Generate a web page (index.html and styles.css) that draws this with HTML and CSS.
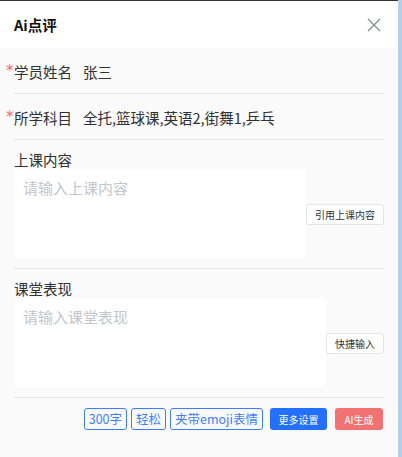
FILE: index.html
```html
<!DOCTYPE html>
<html lang="zh-CN">
  <head>
    <meta charset="UTF-8" />
    <meta name="viewport" content="width=device-width, initial-scale=1.0" />
    <title>Ai点评</title>
    <link rel="stylesheet" href="styles.css">
  </head>
  <body>
    <div class="dialog">
      <header class="dialog-header">
        <span class="dialog-title">Ai点评</span>
        <button class="close-btn" type="button" aria-label="关闭">
          <svg width="14" height="14" viewBox="0 0 14 14">
            <path d="M1 1L13 13M13 1L1 13" stroke="#8a8f99" stroke-width="1.4" fill="none" />
          </svg>
        </button>
      </header>

      <div class="dialog-body">
        <div class="info-row">
          <span class="required">*</span>
          <span class="info-label">学员姓名</span>
          <span class="info-value">张三</span>
        </div>
        <div class="info-row">
          <span class="required">*</span>
          <span class="info-label">所学科目</span>
          <span class="info-value">全托,篮球课,英语2,街舞1,乒乓</span>
        </div>

        <div class="field">
          <div class="field-label">上课内容</div>
          <div class="field-input">
            <textarea placeholder="请输入上课内容"></textarea>
            <button class="side-btn" type="button">引用上课内容</button>
          </div>
        </div>

        <div class="field">
          <div class="field-label">课堂表现</div>
          <div class="field-input">
            <textarea class="wide" placeholder="请输入课堂表现"></textarea>
            <button class="side-btn" type="button">快捷输入</button>
          </div>
        </div>

        <div class="actions">
          <span class="tag">300字</span>
          <span class="tag">轻松</span>
          <span class="tag">夹带emoji表情</span>
          <button class="btn btn-primary" type="button">更多设置</button>
          <button class="btn btn-danger" type="button">AI生成</button>
        </div>
      </div>
    </div>
    <div class="scroll-strip"></div>
  </body>
</html>
```

FILE: styles.css
```css
* {
  margin: 0;
  padding: 0;
  box-sizing: border-box;
}

body {
  display: flex;
  height: 100vh;
  font-family: "Noto Sans CJK SC", "Noto Sans", sans-serif;
  color: #303133;
  background-color: #fafafa;
  overflow: hidden;
}

.dialog {
  flex: 1;
  display: flex;
  flex-direction: column;
  border-top: 1px solid #333;
  background-color: #fafafa;
}

.scroll-strip {
  width: 4px;
  background-color: #b5cde9;
}

.dialog-header {
  height: 47px;
  display: flex;
  align-items: center;
  justify-content: space-between;
  padding: 0 17px 0 14px;
  background-color: #fff;
}

.dialog-title {
  font-size: 14.5px;
  font-weight: bold;
  color: #111;
  line-height: 20px;
}

.close-btn {
  display: flex;
  border: none;
  background: none;
  cursor: pointer;
}

.dialog-body {
  padding: 0 14px;
}

.info-row {
  display: flex;
  align-items: center;
  padding: 13px 0 10px;
  line-height: 22px;
  font-size: 14.5px;
  border-bottom: 1px solid #e6e6e6;
}

.required {
  color: #f56c6c;
  font-family: "DejaVu Sans", sans-serif;
  font-size: 15px;
  margin-left: -8px;
  width: 8px;
  line-height: 14px;
  margin-top: -2px;
}

.info-value {
  margin-left: 11px;
}

.field {
  padding: 10px 0;
  border-bottom: 1px solid #e6e6e6;
}

.field-label {
  font-size: 14.5px;
  line-height: 20px;
}

.field-input {
  display: flex;
  align-items: center;
}

textarea {
  width: 292px;
  height: 88px;
  resize: none;
  border: none;
  border-radius: 4px;
  background-color: #fff;
  padding: 7px 9px;
  font-family: inherit;
  font-size: 15px;
  line-height: 22px;
  color: #303133;
  outline: none;
}

textarea.wide {
  width: 312px;
}

textarea::placeholder {
  color: #c3c6cc;
}

.side-btn {
  height: 21px;
  padding: 0 8px;
  margin-left: auto;
  background-color: #fff;
  border: 1px solid #e4e4e4;
  border-radius: 3px;
  font-family: inherit;
  font-size: 10px;
  color: #303133;
  cursor: pointer;
}

.actions {
  display: flex;
  justify-content: flex-end;
  align-items: center;
  gap: 4px;
  padding: 10px 1px 0 0;
}

.tag {
  height: 22px;
  line-height: 20px;
  padding: 0 4px;
  border: 1px solid #3d7eff;
  border-radius: 3px;
  font-size: 12.5px;
  color: #3d7eff;
}

.btn {
  height: 22px;
  border: none;
  border-radius: 3px;
  font-family: inherit;
  font-size: 10px;
  color: #fff;
  cursor: pointer;
}

.btn-primary {
  padding: 0 8.5px;
  margin-left: 3px;
  background-color: #2370ff;
}

.btn-danger {
  padding: 0 9.5px;
  margin-left: 4px;
  background-color: #f27273;
}
```
